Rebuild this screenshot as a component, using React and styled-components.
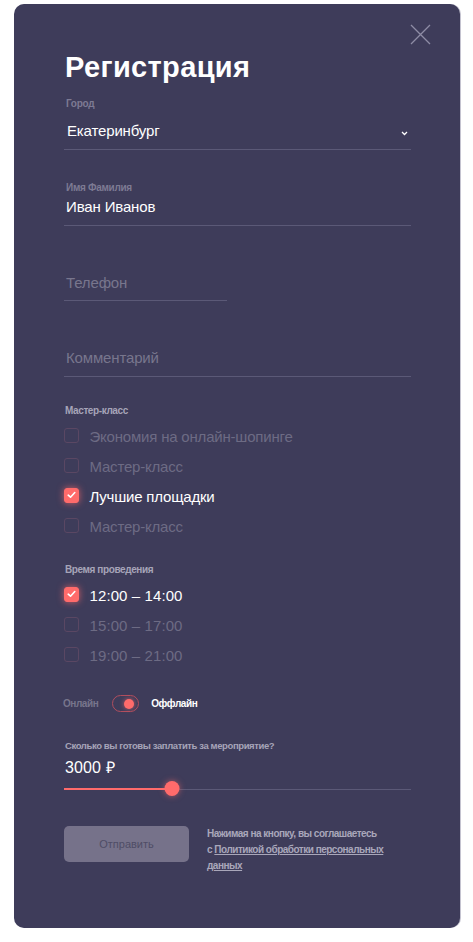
import React, { useState } from "react";
import styled, { createGlobalStyle } from "styled-components";

const Global = createGlobalStyle`
  html, body { margin: 0; padding: 0; background: #ffffff; }
  body { font-family: "Liberation Sans", Arial, sans-serif; }
  * { box-sizing: border-box; }
`;

const Page = styled.div`
  padding: 4px 13px 14px 14px;
`;

const Panel = styled.div`
  position: relative;
  width: 446px;
  height: 924px;
  background: #3e3c5a;
  border-radius: 10px;
  box-shadow: 1px 0 0 #c4c3d0;
  padding: 47px 49px 0 50px;
  color: #ffffff;
`;

const Close = styled.button`
  position: absolute;
  top: 20px;
  right: 29px;
  width: 21px;
  height: 21px;
  padding: 0;
  border: 0;
  background: transparent;
  display: flex;
  align-items: center;
  justify-content: center;
`;

const Title = styled.h1`
  margin: 0 0 15px 1px;
  font-size: 29px;
  line-height: 32px;
  font-weight: 700;
  color: #ffffff;
  letter-spacing: 0.35px;
`;

const Field = styled.div`
  width: ${(p) => p.$width || 347}px;
  margin-top: ${(p) => p.$top || 0}px;
  border-bottom: 1px solid #5b5977;
  padding-bottom: ${(p) => p.$pb || 8}px;
  position: relative;
`;

const Label = styled.div`
  font-size: 10px;
  line-height: 12px;
  font-weight: 700;
  color: #7d7a93;
  padding-left: 2px;
  letter-spacing: -0.3px;
`;

const Value = styled.div`
  margin-top: ${(p) => p.$gap || 0}px;
  font-size: 15px;
  line-height: 20px;
  color: ${(p) => (p.$placeholder ? "#78768d" : "#ffffff")};
  padding-left: ${(p) => p.$pl ?? 2}px;
  letter-spacing: -0.15px;
  display: flex;
  justify-content: space-between;
  align-items: center;
`;

const Chevron = styled.span`
  display: flex;
  margin-right: 3px;
  margin-top: 4px;
`;

const Section = styled.div`
  margin-top: ${(p) => p.$top}px;
`;

const SectionLabel = styled.div`
  font-size: 10px;
  line-height: 12px;
  font-weight: 700;
  color: #a6a4b8;
  padding-left: 1px;
  margin-bottom: 5px;
  letter-spacing: -0.4px;
`;

const Row = styled.label`
  display: flex;
  align-items: center;
  height: 30px;
  gap: 10.5px;
`;

const Box = styled.span`
  width: 15px;
  height: 15px;
  margin-bottom: 4px;
  border-radius: 3px;
  flex: none;
  display: flex;
  align-items: center;
  justify-content: center;
  border: 1px solid ${(p) => (p.$on ? "#ff6b6b" : "#5a4763")};
  background: ${(p) => (p.$on ? "#ff6b6b" : "transparent")};
  box-shadow: ${(p) => (p.$on ? "0 0 7px rgba(255,107,107,0.75)" : "none")};
`;

const RowText = styled.span`
  font-size: 15px;
  line-height: 20px;
  color: ${(p) => (p.$on ? "#ffffff" : "#6d6b84")};
  letter-spacing: ${(p) => p.$ls || "-0.2px"};
`;

const ToggleRow = styled.div`
  margin-top: 24px;
  margin-left: -1px;
  display: flex;
  align-items: center;
  height: 17px;
`;

const ToggleText = styled.span`
  font-size: 10px;
  font-weight: 700;
  letter-spacing: -0.45px;
  color: ${(p) => (p.$on ? "#ffffff" : "#77758c")};
`;

const Switch = styled.span`
  width: 27px;
  height: 17px;
  border: 1px solid #b04e5e;
  border-radius: 9px;
  display: flex;
  align-items: center;
  justify-content: flex-end;
  padding-right: 4px;
  margin: 0 12px 0 14px;
`;

const Knob = styled.span`
  width: 10px;
  height: 10px;
  border-radius: 50%;
  background: #ff6b6b;
  box-shadow: 0 0 5px rgba(255, 107, 107, 0.7);
`;

const PriceLabel = styled.div`
  margin-top: 28px;
  font-size: 9.5px;
  line-height: 12px;
  font-weight: 700;
  color: #a6a4b8;
  padding-left: 1px;
  letter-spacing: -0.4px;
`;

const Price = styled.div`
  margin-top: 6px;
  font-size: 16px;
  line-height: 20px;
  color: #ffffff;
  padding-left: 1px;
  letter-spacing: 0.1px;
`;

const Slider = styled.div`
  margin-top: 3px;
  width: 347px;
  height: 16px;
  position: relative;
  display: flex;
  align-items: center;
`;

const Track = styled.div`
  flex: 1;
  height: 1px;
  background: #5b5977;
  display: flex;
  align-items: center;
`;

const Fill = styled.div`
  height: 2px;
  background: #ff6b6b;
`;

const Thumb = styled.span`
  position: absolute;
  top: 0;
  width: 15px;
  height: 15px;
  border-radius: 50%;
  background: #ff6b6b;
  box-shadow: 0 0 6px rgba(255, 107, 107, 0.6);
  transform: translateX(-50%);
`;

const Footer = styled.div`
  margin-top: 29px;
  display: flex;
  align-items: flex-start;
  gap: 18px;
`;

const Submit = styled.button`
  width: 125px;
  height: 36px;
  border: 0;
  border-radius: 5px;
  background: #76728a;
  color: #4f4d66;
  font-family: "Liberation Sans", Arial, sans-serif;
  font-size: 11px;
  flex: none;
`;

const Note = styled.p`
  margin: 0;
  width: 200px;
  font-size: 10px;
  line-height: 16px;
  font-weight: 700;
  letter-spacing: -0.5px;
  color: #a9a7ba;
  a {
    color: inherit;
    text-decoration: underline;
  }
`;

const Check = () => (
  <svg width="9" height="8" viewBox="0 0 9 8">
    <polyline points="1.2,4.2 3.5,6.2 7.8,1.5" fill="none" stroke="#fff" strokeWidth="1.6" strokeLinecap="round" strokeLinejoin="round" />
  </svg>
);

const courses = [
  { t: "Экономия на онлайн-шопинге", on: false },
  { t: "Мастер-класс", on: false },
  { t: "Лучшие площадки", on: true },
  { t: "Мастер-класс", on: false },
];

const times = [
  { t: "12:00 – 14:00", on: true },
  { t: "15:00 – 17:00", on: false },
  { t: "19:00 – 21:00", on: false },
];

export default function App() {
  const [price] = useState(3000);
  const pct = 31;
  return (
    <>
      <Global />
      <Page>
        <Panel>
          <Close aria-label="Закрыть">
            <svg width="21" height="21" viewBox="0 0 21 21">
              <path d="M1 1 L20 20 M20 1 L1 20" stroke="#8e8ca5" strokeWidth="1.3" fill="none" />
            </svg>
          </Close>
          <Title>Регистрация</Title>

          <Field $pb={8}>
            <Label>Город</Label>
            <Value $gap={11} $pl={3}>
              <span>Екатеринбург</span>
              <Chevron>
                <svg width="7" height="5" viewBox="0 0 7 5">
                  <polyline points="1,1 3.5,3.5 6,1" fill="none" stroke="#fff" strokeWidth="1.3" />
                </svg>
              </Chevron>
            </Value>
          </Field>

          <Field $top={32} $pb={8}>
            <Label>Имя Фамилия</Label>
            <Value $gap={3}>Иван Иванов</Value>
          </Field>

          <Field $top={47} $pb={7} $width={163}>
            <Value $placeholder>Телефон</Value>
          </Field>

          <Field $top={47} $pb={8}>
            <Value $placeholder>Комментарий</Value>
          </Field>

          <Section $top={28}>
            <SectionLabel>Мастер-класс</SectionLabel>
            {courses.map((c, i) => (
              <Row key={i}>
                <Box $on={c.on}>{c.on && <Check />}</Box>
                <RowText $on={c.on}>{c.t}</RowText>
              </Row>
            ))}
          </Section>

          <Section $top={22}>
            <SectionLabel>Время проведения</SectionLabel>
            {times.map((c, i) => (
              <Row key={i}>
                <Box $on={c.on}>{c.on && <Check />}</Box>
                <RowText $on={c.on} $ls="0.1px">{c.t}</RowText>
              </Row>
            ))}
          </Section>

          <ToggleRow>
            <ToggleText>Онлайн</ToggleText>
            <Switch>
              <Knob />
            </Switch>
            <ToggleText $on>Оффлайн</ToggleText>
          </ToggleRow>

          <PriceLabel>Сколько вы готовы заплатить за мероприятие?</PriceLabel>
          <Price>{price} ₽</Price>
          <Slider>
            <Track>
              <Fill style={{ width: `${pct}%` }} />
            </Track>
            <Thumb style={{ left: `${pct}%` }} />
          </Slider>

          <Footer>
            <Submit>Отправить</Submit>
            <Note>
              Нажимая на кнопку, вы соглашаетесь
              <br />
              с <a href="#">Политикой обработки персональных</a>
              <br />
              <a href="#">данных</a>
            </Note>
          </Footer>
        </Panel>
      </Page>
    </>
  );
}
